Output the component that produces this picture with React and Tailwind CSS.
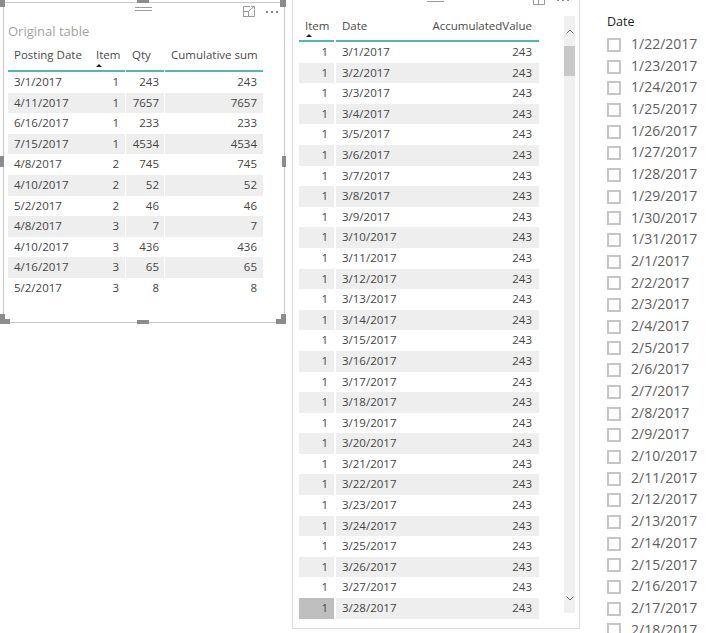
import React from 'react';

const originalRows = [
  ['3/1/2017', 1, 243, 243],
  ['4/11/2017', 1, 7657, 7657],
  ['6/16/2017', 1, 233, 233],
  ['7/15/2017', 1, 4534, 4534],
  ['4/8/2017', 2, 745, 745],
  ['4/10/2017', 2, 52, 52],
  ['5/2/2017', 2, 46, 46],
  ['4/8/2017', 3, 7, 7],
  ['4/10/2017', 3, 436, 436],
  ['4/16/2017', 3, 65, 65],
  ['5/2/2017', 3, 8, 8],
];

const accumRows = Array.from({ length: 28 }, (_, i) => `3/${i + 1}/2017`);

const sliderDates = [
  ...Array.from({ length: 10 }, (_, i) => `1/${i + 22}/2017`),
  ...Array.from({ length: 18 }, (_, i) => `2/${i + 1}/2017`),
];

const FocusIcon = () => (
  <svg width="12" height="11" viewBox="0 0 12 11" fill="none" stroke="#9a9a9a" strokeWidth="1">
    <path d="M7 0.5H0.5V10.5H11.5V4" />
    <rect x="0.5" y="5.5" width="5" height="5" />
    <path d="M6 5L11 0.5M8 0.5H11.5V3.5" />
  </svg>
);

const Dots = () => (
  <div className="flex gap-[3px]">
    <span className="w-[2px] h-[2px] bg-[#8a8a8a]" />
    <span className="w-[2px] h-[2px] bg-[#8a8a8a]" />
    <span className="w-[2px] h-[2px] bg-[#8a8a8a]" />
  </div>
);

const DragLines = () => (
  <div className="flex flex-col gap-[2px] w-[17px]">
    <span className="h-px bg-[#9a9a9a]" />
    <span className="h-px bg-[#9a9a9a]" />
  </div>
);

const SortArrow = () => (
  <span className="absolute left-[6px] top-[24px] w-0 h-0 border-l-[3px] border-r-[3px] border-b-[3px] border-l-transparent border-r-transparent border-b-[#222]" />
);

const Handle = ({ className }) => <span className={`absolute bg-[#8c8c8c] ${className}`} />;

const OriginalTable = () => (
  <div className="relative ml-[3px] mt-[2px] w-[282px] h-[321px] border border-[#c8c8c8] bg-white shrink-0">
    <Handle className="left-[-4px] top-[-3px] w-[5px] h-[7px]" />
    <Handle className="left-[133px] top-[-3px] w-[12px] h-[3px]" />
    <Handle className="left-[276px] top-[-3px] w-[6px] h-[7px]" />
    <Handle className="left-[-4px] top-[153px] w-[4px] h-[11px]" />
    <Handle className="left-[278px] top-[153px] w-[4px] h-[11px]" />
    <Handle className="left-[-4px] top-[311px] w-[5px] h-[10px]" />
    <Handle className="left-[-4px] top-[316px] w-[10px] h-[5px]" />
    <Handle className="left-[277px] top-[311px] w-[5px] h-[10px]" />
    <Handle className="left-[272px] top-[316px] w-[10px] h-[5px]" />
    <Handle className="left-[133px] top-[317px] w-[12px] h-[4px]" />

    {/* visual header */}
    <div className="flex items-start h-[16px]">
      <div className="ml-[131px] mt-[4px]">
        <DragLines />
      </div>
      <div className="ml-[91px] mt-[3px]">
        <FocusIcon />
      </div>
      <div className="ml-[11px] mt-[8px]">
        <Dots />
      </div>
    </div>

    <div className="mt-[3px] ml-[4px] h-[18px] leading-[18px] text-[13px] text-[#a3a3a3]">Original table</div>

    <div className="ml-[4px] text-[11.5px] text-[#454545]">
      <div className="flex h-[32px] text-[#4a4a4a]">
        <div className="w-[82px] pl-[6px] pt-[4px] leading-[22px] border-b-2 border-[#52b8ac]">Posting Date</div>
        <div className="relative w-[35px] pl-[6px] pt-[4px] leading-[22px] border-b-2 border-[#52b8ac]">
          Item
          <SortArrow />
        </div>
        <div className="ml-px w-[38px] pl-[6px] pt-[4px] leading-[22px] border-b-2 border-[#52b8ac]">Qty</div>
        <div className="ml-px w-[98px] pl-[6px] pt-[4px] leading-[22px] border-b-2 border-[#52b8ac]">Cumulative sum</div>
      </div>
      {originalRows.map(([date, item, qty, cum], i) => {
        const bg = i % 2 === 1 ? 'bg-[#eeeeee]' : 'bg-white';
        return (
          <div key={i} className="flex h-[20.6px] leading-[20.6px]">
            <div className={`w-[82px] pl-[6px] ${bg}`}>{date}</div>
            <div className={`w-[35px] pr-[6px] text-right ${bg}`}>{item}</div>
            <div className={`ml-px w-[38px] pr-[5px] text-right ${bg}`}>{qty}</div>
            <div className={`ml-px w-[98px] pr-[6px] text-right ${bg}`}>{cum}</div>
          </div>
        );
      })}
    </div>
  </div>
);

const Chevron = ({ down }) => (
  <svg width="8" height="5" viewBox="0 0 8 5" fill="none" stroke="#6a6a6a" strokeWidth="1">
    <path d={down ? 'M0.5 0.5L4 4L7.5 0.5' : 'M0.5 4.5L4 1L7.5 4.5'} />
  </svg>
);

const AccumTable = () => (
  <div className="ml-[7px] mt-[-10px] w-[288px] h-[639px] border border-[#e1e1e1] bg-white shrink-0">
    <div className="flex items-start h-[18px]">
      <div className="ml-[134px] mt-[7px]">
        <DragLines />
      </div>
      <div className="ml-[89px] mt-[3px]">
        <FocusIcon />
      </div>
      <div className="ml-[12px] mt-[8px]">
        <Dots />
      </div>
    </div>

    <div className="flex items-start">
      <div className="ml-[6px] text-[11.5px] text-[#454545]">
        <div className="flex h-[33px] text-[#4a4a4a]">
          <div className="relative w-[35px] pl-[6px] pt-[6px] leading-[22px] border-b-2 border-[#52b8ac]">
            Item
            <span className="absolute left-[7px] top-[25px] w-0 h-0 border-l-[3px] border-r-[3px] border-b-[3px] border-l-transparent border-r-transparent border-b-[#222]" />
          </div>
          <div className="ml-[2px] w-[203px] flex justify-between pl-[6px] pr-[7px] pt-[6px] leading-[22px] border-b-2 border-[#52b8ac]">
            <span>Date</span>
            <span>AccumulatedValue</span>
          </div>
        </div>
        {accumRows.map((date, i) => {
          const bg = i % 2 === 1 ? 'bg-[#eeeeee]' : 'bg-white';
          const last = i === accumRows.length - 1;
          return (
            <div key={date} className="flex h-[20.6px] leading-[20.6px]">
              <div className={`w-[35px] pr-[6px] text-right ${last ? 'bg-[#bfbfbf]' : bg}`}>1</div>
              <div className={`ml-[2px] w-[203px] flex justify-between pl-[6px] pr-[7px] ${bg}`}>
                <span>{date}</span>
                <span>243</span>
              </div>
            </div>
          );
        })}
      </div>

      <div className="ml-[25px] mt-[7px] w-[11px] h-[597px] flex flex-col bg-[#f0f0f0]">
        <div className="h-[30px] flex items-center justify-center">
          <Chevron />
        </div>
        <div className="h-[30px] bg-[#c8c8c8]" />
        <div className="flex-1" />
        <div className="h-[30px] flex items-center justify-center">
          <Chevron down />
        </div>
      </div>
    </div>
  </div>
);

const DateSlicer = () => (
  <div className="ml-[27px] mt-[11px] shrink-0">
    <div className="h-[22px] leading-[22px] text-[12.5px] text-[#252525]">Date</div>
    {sliderDates.map((d) => (
      <div key={d} className="flex items-center h-[21.7px]">
        <span className="mt-[2px] w-[14px] h-[14px] border-2 border-[#c6c6c6] shrink-0" />
        <span className="ml-[10px] text-[14px] leading-[21.7px] text-[#5e5e5e] whitespace-nowrap">{d}</span>
      </div>
    ))}
  </div>
);

export default function App() {
  return (
    <div className="flex items-start w-[721px] h-[633px] overflow-hidden bg-white font-['Segoe_UI','Open_Sans',sans-serif]">
      <OriginalTable />
      <AccumTable />
      <DateSlicer />
    </div>
  );
}
